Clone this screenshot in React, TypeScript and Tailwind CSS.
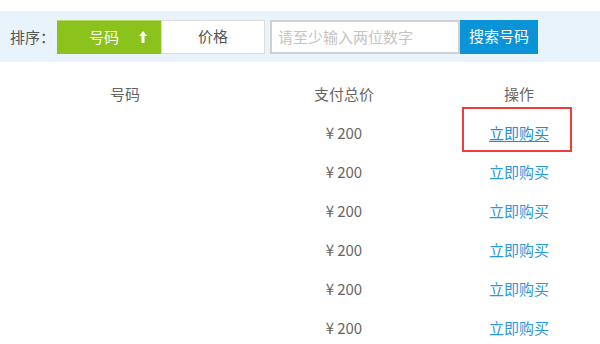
const rows = [1, 2, 3, 4, 5, 6];

function ArrowUp() {
  return (
    <svg width="8" height="12" viewBox="0 0 8 12" className="block">
      <path d="M4 0 L8 5 L5.5 5 L5.5 12 L2.5 12 L2.5 5 L0 5 Z" fill="#ffffff" />
    </svg>
  );
}

export default function App() {
  return (
    <div
      className="w-[600px] h-[344px] bg-white overflow-hidden relative text-[15px]"
      style={{ fontFamily: '"Noto Sans CJK SC", "Noto Sans", sans-serif' }}
    >
      {/* sort / search bar */}
      <div className="mt-[11px] h-[51px] bg-[#e8f3fb] flex items-center pl-[10px]">
        <span className="text-[#555] mr-[2px] leading-none">排序：</span>
        <div className="flex h-[34px]">
          <button className="w-[104px] h-full bg-[#8cc21c] border-t border-[#b5da6a] text-white flex items-center justify-center gap-[20px] pl-[18px]">
            <span>号码</span>
            <ArrowUp />
          </button>
          <button className="w-[104px] h-full bg-white border border-[#dcdcdc] text-[#555] flex items-center justify-center">
            价格
          </button>
        </div>
        <input
          className="ml-[5px] w-[190px] h-[34px] border-2 border-[#d0d0d0] bg-white px-[6px] text-[15px] outline-none placeholder:text-[#c4c4c4]"
          placeholder="请至少输入两位数字"
        />
        <button className="w-[78px] h-[34px] bg-[#0a93d6] text-white flex items-center justify-center">
          搜索号码
        </button>
      </div>

      {/* result table */}
      <div className="grid grid-cols-[250px_188px_162px] mt-[13px] text-[#666]">
        <div className="h-[39px] flex items-center justify-center">号码</div>
        <div className="h-[39px] flex items-center justify-center">支付总价</div>
        <div className="h-[39px] flex items-center justify-center">操作</div>
        {rows.map((r) => (
          <div key={r} className="contents">
            <div className="h-[39px]" />
            <div className="h-[39px] flex items-center justify-center gap-[3px]">
              <span>¥</span>
              <span>200</span>
            </div>
            <div className="h-[39px] flex items-center justify-center">
              <a
                href="#"
                className={
                  r === 1
                    ? "text-[#1a8ed8] underline underline-offset-2"
                    : "text-[#2a98dc]"
                }
              >
                立即购买
              </a>
            </div>
          </div>
        ))}
      </div>

      {/* annotation box */}
      <div className="absolute left-[462px] top-[107px] w-[110px] h-[45px] border-2 border-[#ee3b3b] pointer-events-none" />
    </div>
  );
}
